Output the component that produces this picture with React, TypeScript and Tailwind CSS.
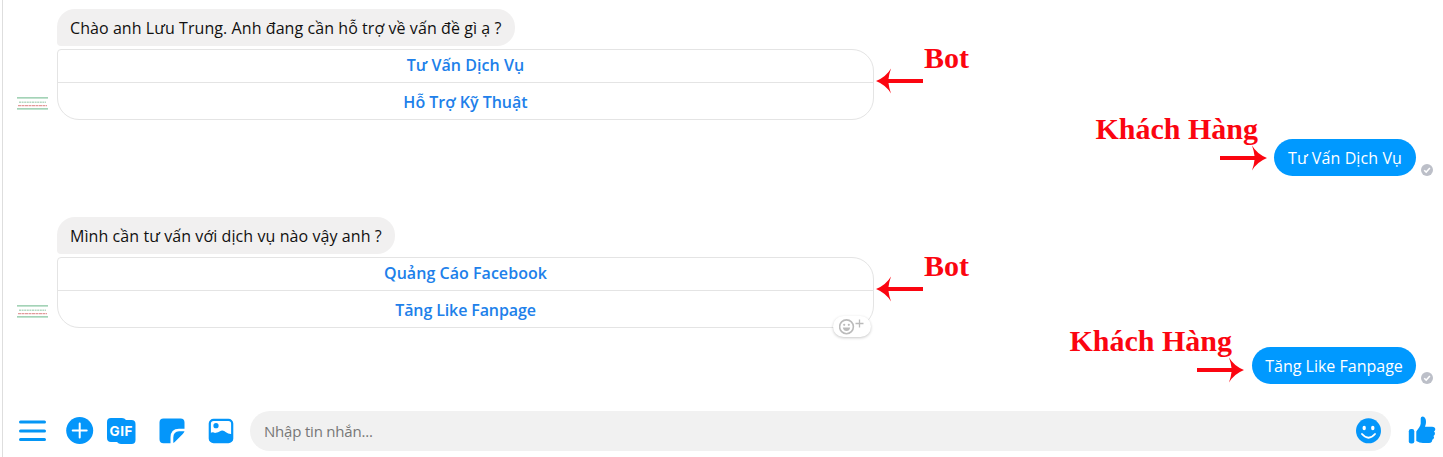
import React from "react";

const UI = "font-['Open_Sans','Noto_Sans',sans-serif]";

function Avatar() {
  return (
    <svg width="31" height="13" viewBox="0 0 31 13" aria-hidden="true">
      <path d="M0 .9H31M0 11.9H31" stroke="#86c5a0" strokeWidth="1.1" />
      <path d="M2 5.2H29" stroke="#b4d8c2" strokeWidth="1.6" strokeDasharray="2 .6" />
      <path d="M1 8.6H30" stroke="#e29a9a" strokeWidth="1.3" strokeDasharray="3 .5" />
    </svg>
  );
}

function Arrow({ left = false }: { left?: boolean }) {
  return (
    <svg width="47" height="26" viewBox="0 0 47 26" className={left ? "block shrink-0 -scale-x-100" : "block shrink-0"} aria-hidden="true">
      <path d="M0 11H34.500Q34 6 32 .5Q37 9 47 13Q37 17 32 25.500Q34 20 34.500 15H0Z" fill="#fb0510" />
    </svg>
  );
}

function Label({ children, className = "" }: { children: React.ReactNode; className?: string }) {
  return (
    <span className={`block whitespace-nowrap font-['Liberation_Serif',serif] text-[30px] leading-[34px] font-bold text-[#fb0510] ${className}`}>
      {children}
    </span>
  );
}

function Reaction() {
  return (
    <div className="absolute right-[2px] -bottom-[10px] flex h-[21px] w-[38px] items-center justify-center rounded-full bg-white shadow-[0_1px_3px_rgba(0,0,0,0.22)]">
      <svg width="27" height="17" viewBox="0 0 27 17" fill="none" stroke="#bbb" aria-hidden="true">
        <circle cx="7.500" cy="8.800" r="6.900" strokeWidth="1.600" />
        <path d="M3.800 9.500H11.200Q10.500 13 7.500 13T3.800 9.500Z" fill="#bbb" stroke="none" />
        <circle cx="5.200" cy="6.800" r="1.100" fill="#bbb" stroke="none" />
        <circle cx="9.800" cy="6.800" r="1.100" fill="#bbb" stroke="none" />
        <path d="M16.500 5.500H24.500M20.500 1.500V9.500" strokeWidth="1.300" />
      </svg>
    </div>
  );
}

type BotProps = {
  message: string;
  messageClass: string;
  options: { text: string; className: string }[];
  reaction?: boolean;
};

function BotMessage({ message, messageClass, options, reaction }: BotProps) {
  return (
    <section className="flex h-[111px] pl-[14px]">
      <div className="flex w-10 items-end pb-[10px]">
        <Avatar />
      </div>
      <div className="flex w-[817px] flex-col items-start">
        <div className={`flex h-[37px] items-center rounded-[18px] rounded-bl-[4px] bg-[#f1f0f0] pl-[13px] text-base whitespace-nowrap text-[#111] ${messageClass}`}>
          <span>{message}</span>
        </div>
        <div className="relative mt-[3px] h-[71px] w-full rounded-[22px] rounded-tl-[4px] border border-[#e4e4e4]">
          <div className="flex h-[33px] items-center justify-center border-b border-[#e4e4e4] pb-[2px] text-base font-semibold text-[#2080ea]">
            <span className={options[0].className}>{options[0].text}</span>
          </div>
          <div className="flex h-9 items-center justify-center pt-[2px] text-base font-semibold text-[#2080ea]">
            <span className={options[1].className}>{options[1].text}</span>
          </div>
          {reaction && <Reaction />}
        </div>
      </div>
      <div className="flex pt-[32px] pl-[2px]">
        <div className="pt-[27px]">
          <Arrow left />
        </div>
        <Label className="pl-px">Bot</Label>
      </div>
    </section>
  );
}

type CustomerProps = { text: string; bubble: string; label: string; note: string };

function CustomerMessage({ text, bubble, label, note }: CustomerProps) {
  return (
    <section className="flex h-[37px] items-start justify-end pr-[10px]">
      <div className={`flex flex-col items-end ${note}`}>
        <Label className={label}>{"Khách Hàng"}</Label>
        <div className="-mt-[1px]">
          <Arrow />
        </div>
      </div>
      <div className={`flex h-[37px] shrink-0 items-center justify-center rounded-full bg-[#0099ff] text-base whitespace-nowrap text-white ${bubble}`}>
        <span>{text}</span>
      </div>
      <svg className="mt-[25px] ml-[5px] shrink-0" width="12" height="12" viewBox="0 0 12 12" aria-hidden="true">
        <circle cx="6" cy="6" r="6" fill="#bcbfc8" />
        <path d="M3.200 6.200L5.200 8.100L8.900 4.100" stroke="#fff" strokeWidth="1.500" fill="none" />
      </svg>
    </section>
  );
}

function Composer() {
  return (
    <footer className="flex h-10 items-center pl-4">
      <svg width="27" height="22" viewBox="0 0 27 22" className="shrink-0" aria-label="Menu">
        <path d="M1.500 2H25.500M1.500 11H25.500M1.500 19.500H25.500" stroke="#0496f5" strokeWidth="3" strokeLinecap="round" />
      </svg>
      <svg width="28" height="28" viewBox="0 0 28 28" className="ml-5 shrink-0" aria-label="Add">
        <circle cx="13.700" cy="13.500" r="13.500" fill="#0496fa" />
        <path d="M6.700 13.500H20.700M13.700 6.500V20.500" stroke="#fff" strokeWidth="2" strokeLinecap="round" />
      </svg>
      <svg width="30" height="28" viewBox="0 0 30 28" className="ml-3 shrink-0" aria-label="GIF">
        <path d="M5 1H16Q18.500 1 20 3H25.500Q29.500 3 29.500 7V23Q29.500 27 25.500 27H15Q12.500 27 11 25H5Q1 25 1 21V5Q1 1 5 1Z" fill="#0496fa" />
        <text x="15" y="18.500" textAnchor="middle" fontFamily="Inter, sans-serif" fontSize="13.500" fontWeight="700" fill="#fff" textLength="23">GIF</text>
      </svg>
      <svg width="26" height="26" viewBox="0 0 26 26" className="ml-[23px] shrink-0" aria-label="Sticker">
        <path d="M4.500 .5H21.500Q25.500 .5 25.500 4.500V10.800H20Q11.500 11 11.500 19.500V25.200H4.500Q.5 25.200 .5 21.200V4.500Q.5 .5 4.500 .5Z" fill="#0496fa" />
        <path d="M14.300 25V19.500Q14.500 13.500 20 13.300H25.500Q25 14.700 23.500 16.200L17.500 22.300Q15.700 24.300 14.300 25Z" fill="#0496fa" />
      </svg>
      <svg width="26" height="26" viewBox="0 0 26 26" className="ml-[23px] shrink-0" aria-label="Photo">
        <rect x="1.800" y="1.800" width="22.400" height="22.400" rx="3.800" fill="#fff" stroke="#0496fa" strokeWidth="2.200" />
        <circle cx="8" cy="7.700" r="2.600" fill="#0496fa" />
        <path d="M2 15.500Q4.500 13.500 7 15Q10 14.500 13 12.800Q15.500 12 18 14.300Q20.500 16.500 24 16V21Q24 24 21 24H5Q2 24 2 21Z" fill="#0496fa" />
      </svg>
      <div className="ml-4 flex h-10 w-[1141px] shrink-0 items-center justify-between rounded-full bg-[#f1f1f1] pr-[9px] pl-[14px] text-[#777]">
        <span className="text-[15px] tracking-[-0.2px]">{"Nhập tin nhắn..."}</span>
        <svg width="27" height="26" viewBox="0 0 26 26" aria-label="Emoji">
          <circle cx="13" cy="12.800" r="12.500" fill="#0496fa" />
          <ellipse cx="8.700" cy="10" rx="1.700" ry="2.200" fill="#fff" />
          <ellipse cx="17.300" cy="10" rx="1.700" ry="2.200" fill="#fff" />
          <path d="M6.500 16Q13 23.500 19.500 16" stroke="#fff" strokeWidth="1.900" strokeLinecap="round" fill="none" />
        </svg>
      </div>
      <svg width="28" height="28" viewBox="0 0 28 28" className="mb-[3px] ml-[17px] shrink-0" aria-label="Like">
        <rect x=".8" y="13" width="5.500" height="14.500" rx="2.200" fill="#0496fa" />
        <path d="M8.300 15.500C10 12.500 12.700 10.500 12.700 7.500V2.500Q12.700 .5 14.700 .5Q18 1 18 6Q18 8.500 17 10.800H24Q27.300 11 27.300 13.300Q27.300 14.700 26 15.500Q27.500 16.700 26.800 18.500Q26.400 19.500 25.500 19.900Q26.500 21.200 25.700 22.600Q25.200 23.500 24.200 23.700Q24.500 26.700 21 27H15Q11.500 27 8.300 25Z" fill="#0496fa" />
      </svg>
    </footer>
  );
}

export default function App() {
  return (
    <main className={`h-[457px] w-[1443px] overflow-hidden bg-white pl-[2px] ${UI}`}>
      <div className="flex h-full flex-col border-l border-[#dedede] pt-[9px]">
        <BotMessage
          message="Chào anh Lưu Trung. Anh đang cần hỗ trợ về vấn đề gì ạ ?"
          messageClass="w-[458px] tracking-[0.07px]"
          options={[
            { text: "Tư Vấn Dịch Vụ", className: "tracking-[0.06px]" },
            { text: "Hỗ Trợ Kỹ Thuật", className: "tracking-[0px]" },
          ]}
        />
        <div className="mt-[19px]">
          <CustomerMessage text="Tư Vấn Dịch Vụ" bubble="ml-[7px] w-[142px] tracking-[0.1px]" label="mr-[9px] tracking-[0px]" note="-mt-[27px]" />
        </div>
        <div className="mt-[41px]">
          <BotMessage
            message="Mình cần tư vấn với dịch vụ nào vậy anh ?"
            messageClass="w-[338px] tracking-[0.08px]"
            options={[
              { text: "Quảng Cáo Facebook", className: "tracking-[0.04px]" },
              { text: "Tăng Like Fanpage", className: "tracking-[-0.12px]" },
            ]}
            reaction
          />
        </div>
        <div className="mt-[19px]">
          <CustomerMessage text="Tăng Like Fanpage" bubble="ml-2 w-[164px] tracking-[0px]" label="mr-[12px] tracking-[0px]" note="-mt-[23px]" />
        </div>
        <div className="mt-[27px]">
          <Composer />
        </div>
      </div>
    </main>
  );
}
